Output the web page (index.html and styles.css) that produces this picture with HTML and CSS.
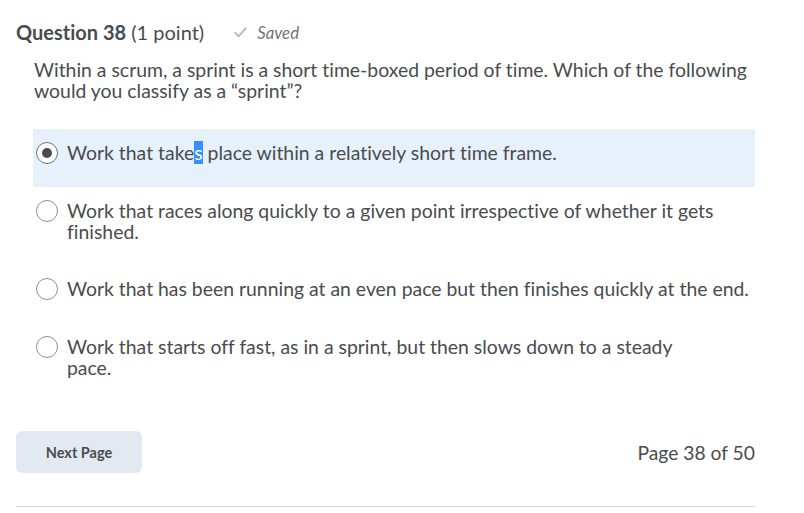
FILE: index.html
```html
<!DOCTYPE html>
<html>
<head>
<meta charset="utf-8">
<link rel="stylesheet" href="styles.css">
</head>
<body>
<div class="page">
  <div class="qhead">
    <span class="qtitle"><b>Question 38</b> (1 point)</span>
    <span class="saved">
      <svg width="13" height="11" viewBox="0 0 13 11"><path d="M1.2 5.8 L4.6 9.3 L11.8 1.2" fill="none" stroke="#b3b7ba" stroke-width="1.8" stroke-linecap="round" stroke-linejoin="round"/></svg>
      <i>Saved</i>
    </span>
  </div>
  <div class="qbody">
    <p class="qtext">Within a scrum, a sprint is a short time-boxed period of time. Which of the following would you classify as a “sprint”?</p>
    <div class="options">
      <div class="opt selected"><span class="radio on"></span><span class="otext">Work that take<span class="sel">s</span> place within a relatively short time frame.</span></div>
      <div class="opt"><span class="radio"></span><span class="otext">Work that races along quickly to a given point irrespective of whether it gets<br>finished.</span></div>
      <div class="opt"><span class="radio"></span><span class="otext">Work that has been running at an even pace but then finishes quickly at the end.</span></div>
      <div class="opt"><span class="radio"></span><span class="otext">Work that starts off fast, as in a sprint, but then slows down to a steady<br>pace.</span></div>
    </div>
  </div>
  <div class="footer">
    <button class="next">Next Page</button>
    <span class="pageno">Page 38 of 50</span>
  </div>
  <div class="rule"></div>
</div>
</body>
</html>
```
FILE: styles.css
```css
html, body { margin: 0; padding: 0; background: #fff; }
body { font-family: Lato, "Open Sans", sans-serif; color: #494c4e; font-variant-ligatures: none; }
.page { width: 739px; padding: 21px 0 0 16px; }
.qhead { display: flex; align-items: center; height: 22px; }
.qtitle { font-size: 20px; line-height: 22px; }
.qtitle b { font-weight: 700; }
.saved { display: flex; align-items: center; margin-left: 30px; color: #6e7376; font-size: 16.8px; gap: 10px; }
.saved i { font-style: italic; }
.qbody { padding-left: 17px; }
.qtext { margin: 16px 0 0 1px; font-size: 19.4px; line-height: 21px; }
.options { margin-top: 28px; }
.opt { display: flex; align-items: flex-start; padding: 13px 0 23px 3px; }
.opt.selected { background: #e7f1fc; }
.radio { width: 22px; height: 22px; border: 1px solid #8a9094; border-radius: 50%; box-sizing: border-box; background: #fff; margin: 0 9px 0 0; flex: none; position: relative; top: -0.5px; }
.radio.on { border-color: #6e7376; }
.radio.on::after { content: ""; position: absolute; left: 5px; top: 5px; width: 10px; height: 10px; border-radius: 50%; background: #494c4e; }
.otext { font-size: 19.4px; line-height: 21px; }
.sel { background: #3390ff; color: #fff; }
.footer { display: flex; justify-content: space-between; align-items: center; margin-top: 30px; }
.next { font-family: Lato, sans-serif; font-weight: 700; font-size: 14.5px; color: #494c4e; background: #e3e9f1; border: none; border-radius: 6px; width: 126px; height: 42px; padding: 0; }
.pageno { font-size: 19.3px; }
.rule { margin-top: 33px; height: 1px; background: #d3d9e3; }
```
